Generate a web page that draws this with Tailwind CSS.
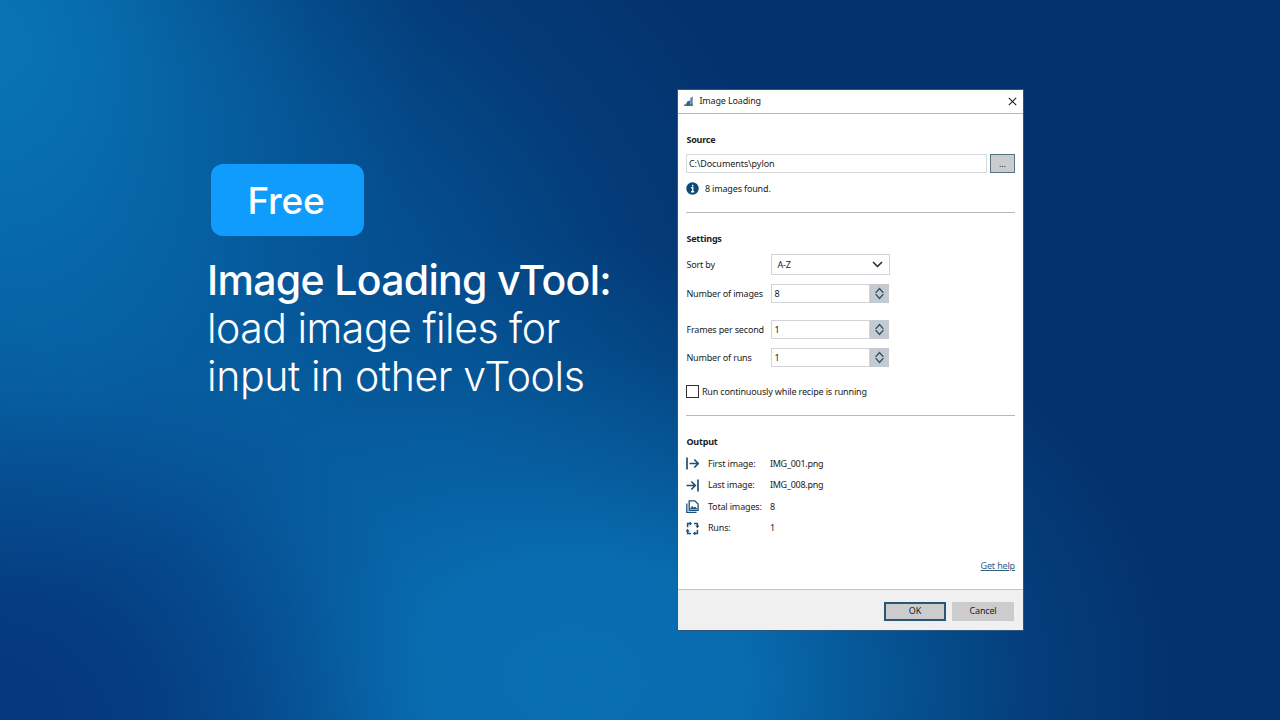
<!DOCTYPE html>
<html lang="en">
<head>
  <meta charset="UTF-8" />
  <meta name="viewport" content="width=device-width, initial-scale=1.0"/>
  <title>Image Loading vTool</title>
  <script src="https://cdn.jsdelivr.net/npm/@tailwindcss/browser@4"></script>
</head>
<body class="bg-[#03326d]">
  <div class="w-[1280px] h-[720px] overflow-hidden flex items-start bg-[radial-gradient(ellipse_420px_560px_at_0px_40px,#0874b4_0%,#0874b4d9_20%,#0874b480_45%,#0874b426_75%,#0874b400_100%),radial-gradient(ellipse_440px_400px_at_0px_720px,#05377c_0%,#05377cd9_30%,#05377c80_58%,#05377c26_82%,#05377c00_100%),radial-gradient(ellipse_600px_440px_at_580px_680px,#086fb2_0%,#086fb2f0_28%,#086fb299_48%,#086fb233_75%,#086fb200_100%),radial-gradient(ellipse_760px_680px_at_80px_400px,#055a9d_0%,#055a9de6_28%,#055a9db3_50%,#055a9d33_78%,#055a9d00_100%)]">

    <!-- Headline -->
    <div class="w-[470px] ml-[207px] mt-[164px] font-['Inter',sans-serif] text-white">
      <div class="ml-1 w-[153px] h-[72px] rounded-[12px] bg-[#109cfc] flex items-center justify-center pt-px pr-[3px] text-[37px] font-medium tracking-[-0.2px]">Free</div>
      <div class="mt-5 text-[41px] leading-[48px] whitespace-nowrap">
        <p class="font-medium tracking-[-0.68px]">Image Loading vTool:</p>
        <p class="font-light tracking-[-0.5px]">load image files for</p>
        <p class="font-light tracking-[-0.4px]">input in other vTools</p>
      </div>
    </div>

    <!-- Dialog -->
    <div class="mt-[89px] w-[347px] h-[542px] border border-[#32567f] bg-white flex flex-col font-['Noto_Sans',sans-serif] text-[9px] leading-3 tracking-[-0.16px] text-[#222] whitespace-nowrap">
      <div class="h-6 shrink-0 border-b border-[#b4b8bc] flex items-center pb-px pl-[6.4px] pr-[6px]">
        <svg class="w-[10px] h-[10px]" viewBox="0 0 10 10">
          <path d="M0 9.5 C2 9 2 6 4 6 V9.5Z" fill="#6f8796"/>
          <path d="M3 9.5 V5.5 L6 4.5 V9.5Z" fill="#36668e"/>
          <path d="M6.2 9.5 V2 L8.8 0.5 V9.5Z" fill="#6589a6"/>
          <path d="M0 9.2H9" stroke="#234b70" stroke-width="1"/>
        </svg>
        <span class="ml-[5px]">Image Loading</span>
        <svg class="ml-auto w-[9px] h-[9px]" viewBox="0 0 9 9" fill="none" stroke="#222" stroke-width="1.1"><path d="M.8.8 8.2 8.2M8.2.8.8 8.2"/></svg>
      </div>

      <div class="flex-1 flex flex-col pl-[8.4px] pr-2">
        <h2 class="mt-5 font-bold tracking-[-0.2px]">Source</h2>
        <div class="mt-2 flex justify-between">
          <div class="w-[301px] h-[19px] border border-[#d5d9dc] flex items-center pl-[1.5px]"><span class="tracking-[-0.05px]">C:\Documents\pylon</span></div>
          <div class="w-[25px] h-[19px] border border-[#57727f] bg-[#c9cdd0] flex items-center justify-center">...</div>
        </div>
        <div class="mt-[9px] h-[13px] flex items-center">
          <svg class="w-[13px] h-[13px]" viewBox="0 0 13 13">
            <circle cx="6.5" cy="6.5" r="6.2" fill="#0c4a77"/>
            <path d="M6.7 2.7v1.7M5.2 5.8h1.5v4M5 9.8h3.2" stroke="#fff" stroke-width="1.4" fill="none"/>
          </svg>
          <span class="ml-[5.5px]">8 images found.</span>
        </div>
        <div class="mt-[17px] h-px shrink-0 bg-[#b4b8bc]"></div>

        <h2 class="mt-5 font-bold tracking-[-0.2px]">Settings</h2>
        <div class="mt-[9px] h-[21px] flex items-center">
          <span class="w-[85px]">Sort by</span>
          <div class="w-[119px] h-[21px] border border-[#d2d4d6] flex items-center justify-between pl-[5px] pr-[6px]">
            <span>A-Z</span>
            <svg class="w-[11px] h-[7px]" viewBox="0 0 11 7" fill="none" stroke="#222" stroke-width="1.5"><path d="M1 1 5.5 5.5 10 1"/></svg>
          </div>
        </div>
        <div class="mt-[9px] h-[19px] flex items-center">
          <span class="w-[85px]">Number of images</span>
          <div class="w-[99px] h-[19px] border border-[#d2d4d6] flex items-center pl-[2px]">8</div>
          <div class="w-[19px] h-[19px] bg-[#c4cacf] flex items-center justify-center">
            <svg class="w-[9px] h-[13px]" viewBox="0 0 9 13" fill="none" stroke="#2d5163" stroke-width="1.4"><path d="M.6 5.9 4.5 1.6l3.9 4.3M.6 7.1l3.9 4.3 3.9-4.3"/></svg>
          </div>
        </div>
        <div class="mt-[17px] h-[19px] flex items-center">
          <span class="w-[85px]">Frames per second</span>
          <div class="w-[99px] h-[19px] border border-[#d2d4d6] flex items-center pl-[2px]">1</div>
          <div class="w-[19px] h-[19px] bg-[#c4cacf] flex items-center justify-center">
            <svg class="w-[9px] h-[13px]" viewBox="0 0 9 13" fill="none" stroke="#2d5163" stroke-width="1.4"><path d="M.6 5.9 4.5 1.6l3.9 4.3M.6 7.1l3.9 4.3 3.9-4.3"/></svg>
          </div>
        </div>
        <div class="mt-[9px] h-[19px] flex items-center">
          <span class="w-[85px]">Number of runs</span>
          <div class="w-[99px] h-[19px] border border-[#d2d4d6] flex items-center pl-[2px]">1</div>
          <div class="w-[19px] h-[19px] bg-[#c4cacf] flex items-center justify-center">
            <svg class="w-[9px] h-[13px]" viewBox="0 0 9 13" fill="none" stroke="#2d5163" stroke-width="1.4"><path d="M.6 5.9 4.5 1.6l3.9 4.3M.6 7.1l3.9 4.3 3.9-4.3"/></svg>
          </div>
        </div>
        <div class="mt-[18px] h-[13px] flex items-center">
          <div class="w-[13px] h-[13px] border border-[#333]"></div>
          <span class="ml-[2.5px]">Run continuously while recipe is running</span>
        </div>
        <div class="mt-[17px] h-px shrink-0 bg-[#b4b8bc]"></div>

        <h2 class="mt-5 font-bold tracking-[-0.2px]">Output</h2>
        <div class="mt-[5px] grid grid-cols-[21.5px_62px_1fr] auto-rows-[21.5px] items-center">
          <svg class="w-[13px] h-[13px]" viewBox="0 0 13 13" fill="none" stroke="#1b5079" stroke-width="1.7"><path d="M1 .5v12M3.5 6.5H12M8.3 2.5l4 4-4 4"/></svg>
          <span>First image:</span><span class="tracking-[-0.25px]">IMG_001.png</span>
          <svg class="w-[13px] h-[13px]" viewBox="0 0 13 13" fill="none" stroke="#1b5079" stroke-width="1.7"><path d="M12 .5v12M.5 6.5H9M5.3 2.5l4 4-4 4"/></svg>
          <span>Last image:</span><span class="tracking-[-0.25px]">IMG_008.png</span>
          <svg class="w-[13px] h-[13px]" viewBox="0 0 13 13" fill="none" stroke="#1b5079" stroke-width="1.3"><path d="M3.2.9h5.6l3.3 3.2v6.3H3.2zM.8 3.5v8.8h9.7"/><path d="m4.2 9 2-2.8L7.8 8 9 6.8 11.2 9z" fill="#1b5079" stroke-width=".5"/></svg>
          <span>Total images:</span><span>8</span>
          <svg class="w-[13px] h-[13px]" viewBox="0 0 13 13" fill="none" stroke="#1b5079" stroke-width="1.5"><path d="M1.6 5.2V1.6H4M8 1.6h3.4V4.2M11.4 7.8v3.6H9M5 11.4H1.6V8.8"/><path d="M3.6-.5 6.2 1.6 3.6 3.8zM9.2 3.6h4.3L11.4 6.2zM9.4 9.2v4.3L6.8 11.4zM-.5 9.4h4.3L1.6 6.8z" fill="#1b5079" stroke="none"/></svg>
          <span>Runs:</span><span>1</span>
        </div>
        <a class="mt-[21px] self-end underline text-[#2f5f82]">Get help</a>
      </div>

      <div class="h-[41px] shrink-0 border-t border-[#c4c4c4] bg-[#f0f0f0] flex items-center justify-end gap-[6px] pr-[9px] pt-[2px]">
        <div class="w-[62px] h-[19px] border-2 border-[#285876] bg-[#cccccc] flex items-center justify-center">OK</div>
        <div class="w-[62px] h-[19px] bg-[#cccccc] flex items-center justify-center">Cancel</div>
      </div>
    </div>
  </div>
</body>
</html>
